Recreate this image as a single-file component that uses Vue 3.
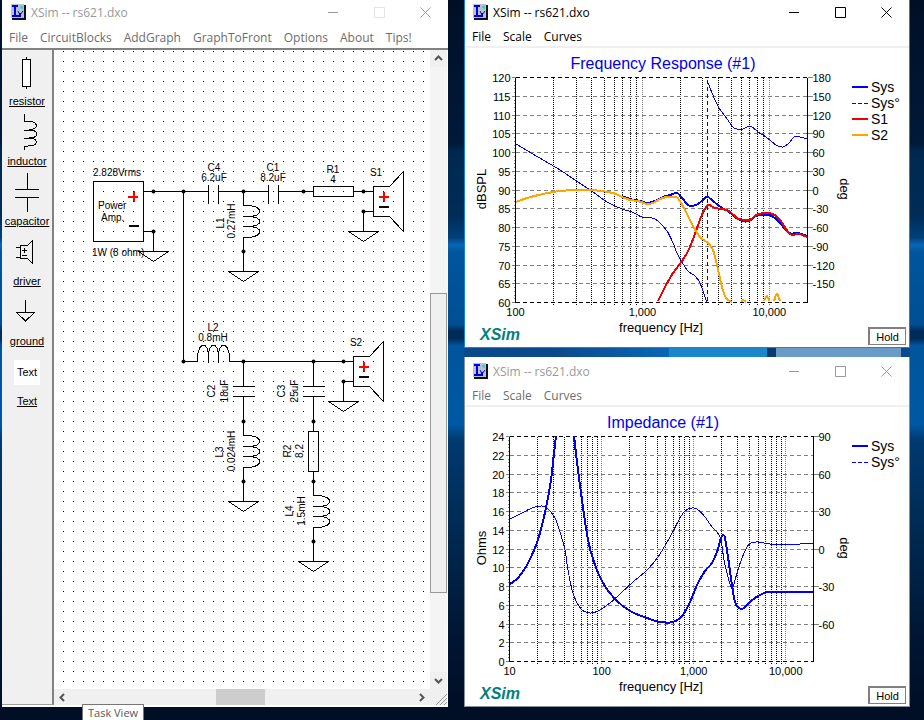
<template>
    <main class="desktop">
        <section class="window editor" aria-label="Circuit editor">
            <header class="title-bar">
                <svg class="app-icon" width="15" height="16" viewBox="0 0 15 16" aria-hidden="true">
                    <path d="M0 0H13V14H0Z" fill="#b9c3cc" />
                    <path d="M14 1V15H1" fill="none" stroke="#111" stroke-width="2" />
                    <path d="M1 2H7M4 2V12M1 12H9V9" fill="none" stroke="#0000e6" stroke-width="2" />
                    <path d="M7 7L9 11M12 7L9 11V13" fill="none" stroke="#0000e6" />
                    <path d="M9 3H12M11 2V5" stroke="#19c8dc" />
                </svg>
                <h1>XSim -- rs621.dxo</h1>
                <div class="caption-buttons">
                    <button v-for="caption in captions" :key="caption.label" :aria-label="caption.label"
                        :class="{ disabled: caption.label === 'Maximize' }">
                        <svg width="11" height="11" viewBox="0 0 11 11">
                            <path :d="caption.path" />
                        </svg>
                    </button>
                </div>
            </header>
            <nav class="menu">
                <button v-for="item in editorMenu" :key="item">{{ item }}</button>
            </nav>
            <div class="workspace">
                <aside class="palette">
                    <button v-for="part in parts" :key="part.name" class="part">
                        <svg v-if="part.path" width="50" height="44" viewBox="0 0 50 44">
                            <path :d="part.path" :fill="part.fill || 'none'" />
                        </svg>
                        <span v-else class="text-tile">Text</span>
                        <span class="part-name">{{ part.name }}</span>
                    </button>
                </aside>
                <div class="scroll-area">
                    <svg class="sheet" role="img" aria-label="Crossover circuit">
                        <defs>
                            <pattern id="dots" width="10" height="10" patternUnits="userSpaceOnUse">
                                <rect x="9" y="1" width="1" height="1" />
                            </pattern>
                        </defs>
                        <rect width="100%" height="100%" fill="#fff" />
                        <g class="wires">
                            <rect x="39.5" y="131.5" width="50" height="60" />
                            <path v-for="(wire, i) in wires" :key="i" :d="wire" />
                            <g v-for="(item, i) in symbols" :key="i"
                                :transform="`translate(${item.x + 0.5} ${item.y + 0.5}) rotate(${item.turn || 0})`">
                                <path :d="shapes[item.type]" />
                                <template v-if="item.type === 'driver'">
                                    <path class="plus" d="M15 5H25M20 0V10" />
                                    <path class="minus" d="M15 15H25" />
                                </template>
                            </g>
                            <path class="plus" d="M74 146.5H84M79.5 141V152" />
                            <path class="minus" d="M75 176H85" />
                        </g>
                        <circle v-for="(node, i) in nodes" :key="i" :cx="node[0] + 0.5" :cy="node[1] + 0.5" r="2" />
                        <rect width="100%" height="100%" fill="url(#dots)" />
                        <g class="labels">
                            <text x="39" y="126">2.828Vrms</text>
                            <text x="44" y="159">Power</text>
                            <text x="47" y="171">Amp.</text>
                            <text x="38" y="206">1W (8 ohm)</text>
                            <text v-for="label in labels" :key="label.text" text-anchor="middle"
                                :transform="`translate(${label.x} ${label.y}) rotate(${label.turn || 0})`">{{ label.text }}</text>
                        </g>
                    </svg>
                    <div class="scrollbar vertical">
                        <button aria-label="Scroll up"><svg width="9" height="9" viewBox="0 0 9 9"><path d="M1 6L4.5 2.5L8 6" /></svg></button>
                        <div class="before"></div>
                        <div class="thumb"></div>
                        <div class="after"></div>
                        <button aria-label="Scroll down"><svg width="9" height="9" viewBox="0 0 9 9"><path d="M1 3L4.5 6.5L8 3" /></svg></button>
                    </div>
                    <div class="scrollbar horizontal">
                        <button aria-label="Scroll left"><svg width="9" height="9" viewBox="0 0 9 9"><path d="M6 1L2.5 4.5L6 8" /></svg></button>
                        <div class="before"></div>
                        <div class="thumb"></div>
                        <div class="after"></div>
                        <button aria-label="Scroll right"><svg width="9" height="9" viewBox="0 0 9 9"><path d="M3 1L6.5 4.5L3 8" /></svg></button>
                    </div>
                    <svg class="grip" width="12" height="12" viewBox="0 0 12 12"><path d="M1 12L12 1M5 12L12 5M9 12L12 9" /></svg>
                </div>
            </div>
        </section>

        <div class="graphs">
            <section v-for="chart in charts" :key="chart.title" class="window graph" :class="{ active: chart.active }"
                :aria-label="chart.title">
                <header class="title-bar">
                    <svg class="app-icon" width="15" height="16" viewBox="0 0 15 16" aria-hidden="true">
                        <path d="M0 0H13V14H0Z" fill="#b9c3cc" />
                        <path d="M14 1V15H1" fill="none" stroke="#111" stroke-width="2" />
                        <path d="M1 2H7M4 2V12M1 12H9V9" fill="none" stroke="#0000e6" stroke-width="2" />
                        <path d="M7 7L9 11M12 7L9 11V13" fill="none" stroke="#0000e6" />
                        <path d="M9 3H12M11 2V5" stroke="#19c8dc" />
                    </svg>
                    <h2>XSim -- rs621.dxo</h2>
                    <div class="caption-buttons">
                        <button v-for="caption in captions" :key="caption.label" :aria-label="caption.label">
                            <svg width="11" height="11" viewBox="0 0 11 11">
                                <path :d="caption.path" />
                            </svg>
                        </button>
                    </div>
                </header>
                <nav class="menu">
                    <button v-for="item in graphMenu" :key="item">{{ item }}</button>
                </nav>
                <div class="plot-area">
                    <svg class="plot" viewBox="0 0 444 299" role="img" :aria-label="chart.title">
                        <text class="plot-title" :x="chart.titleX" y="21" text-anchor="middle">{{ chart.title }}</text>
                        <g class="grid">
                            <path v-for="line in verticals(chart)" :key="line.x" :class="{ decade: line.decade }"
                                class="v-line" :d="`M${line.x} ${top}V${bottom + 3}`" />
                            <path v-for="y in rows(chart)" :key="y" class="h-line" :d="`M${chart.left} ${y}H${chart.right}`" />
                            <path v-for="y in rows(chart)" :key="'t' + y" class="tick" :d="`M${chart.left - 4} ${y}H${chart.left}`" />
                            <path v-for="y in minorTicks(chart)" :key="'m' + y" class="tick"
                                :d="`M${chart.left - 2} ${y}H${chart.left}`" />
                            <path v-for="label in chart.degrees" :key="'d' + label" class="tick"
                                :d="`M${chart.right} ${degreeY(chart, label)}h5`" />
                            <path class="frame-dash" :d="`M${chart.left} ${top}H${chart.right}M${chart.left} ${bottom}H${chart.right}`" />
                            <path class="frame" :d="`M${chart.left} ${top}V${bottom}M${chart.right} ${top}V${bottom}`" />
                        </g>
                        <path v-for="(curve, i) in chart.curves" :key="i" class="curve" :d="smooth(curve.points)"
                            :stroke="curve.color" :stroke-width="curve.width" :stroke-dasharray="curve.dash" />
                        <g class="axis">
                            <text v-for="(y, i) in rows(chart)" :key="y" :x="chart.left - 5" :y="y + 4" text-anchor="end">{{
                                chart.max - i * chart.step }}</text>
                            <text v-for="label in chart.degrees" :key="label" :x="chart.right + 5"
                                :y="degreeY(chart, label) + 4">{{ label }}</text>
                            <text v-for="label in chart.decades" :key="label" :x="freqX(chart, label)" y="268"
                                text-anchor="middle">{{ label.toLocaleString('en-US') }}</text>
                        </g>
                        <g class="axis-title">
                            <text x="196" y="284" text-anchor="middle">frequency [Hz]</text>
                            <text :transform="`translate(21 ${chart.unitY}) rotate(-90)`" text-anchor="middle">{{ chart.unit }}</text>
                            <text transform="translate(375 141) rotate(90)" text-anchor="middle">deg</text>
                        </g>
                        <g class="legend">
                            <template v-for="(entry, i) in chart.legend" :key="entry.name">
                                <path :d="`M387 ${(entry.dash ? 39.5 : 39) + i * 16}h16`" :stroke="entry.color"
                                    :stroke-width="entry.dash ? 1 : 2" :stroke-dasharray="entry.dash" />
                                <text x="406" :y="44 + i * 16">{{ entry.name }}</text>
                            </template>
                        </g>
                    </svg>
                    <div class="plot-footer">
                        <strong>XSim</strong>
                        <button class="hold">Hold</button>
                    </div>
                </div>
            </section>
        </div>
        <div class="tooltip" role="tooltip">Task View</div>
    </main>
</template>

<script setup>
const editorMenu = ['File', 'CircuitBlocks', 'AddGraph', 'GraphToFront', 'Options', 'About', 'Tips!']
const graphMenu = ['File', 'Scale', 'Curves']

const captions = [
    { label: 'Minimize', path: 'M0 5.5H10' },
    { label: 'Maximize', path: 'M0.5 0.5H10.5V10.5H0.5Z' },
    { label: 'Close', path: 'M0.5 0.5L10.5 10.5M10.5 0.5L0.5 10.5' },
]

const parts = [
    { name: 'resistor', fill: '#fff', path: 'M20.5 9.5H28.5V36.5H20.5ZM24.5 7V9M24.5 37V39' },
    { name: 'inductor', path: 'M22.5 4V11H26C37 12 37 19 27 20H22H27C37 20 37 28 27 28H22H27C37 28 37 36 26 36L22.5 37V40' },
    { name: 'capacitor', path: 'M25.5 3V19.5M13 19.5H37M13 27.5H37M25.5 27.5V42' },
    { name: 'driver', path: 'M18.5 15.5H25.5L30.5 10.5V33.5L25.5 28.5H18.5ZM14 17.5H18M14 27.5H18M20 20.5H25M22.5 18V23M20 25.5H25' },
    { name: 'ground', path: 'M23.5 10V22M14.5 22.5H32.5L23.5 31Z' },
    { name: 'Text' },
]

// every symbol hangs down from its first terminal; turn -90 lays it to the right
const shapes = {
    resistor: 'M0 0V10M0 50V60M-5 10H5V50H-5Z',
    capacitor: 'M0 0V25M0 35V60M-11 25H11M-11 35H11',
    capacitorAcross: 'M0 0V25M0 35V60M-12 25H7M-12 35H7',
    inductor: 'M0 0V14H5C20 15 20 25 5 25H-1H5C20 25 20 35 5 35H-1H5C20 35 20 45 5 46H0V60',
    ground: 'M0 0V20M-15 20H15L0 30Z',
    driver: 'M0 0H10M0 20H10M10 -5H26L40 -20V40L26 25H10Z',
}

const symbols = [
    { type: 'capacitorAcross', x: 129, y: 141, turn: -90 },
    { type: 'capacitorAcross', x: 189, y: 141, turn: -90 },
    { type: 'resistor', x: 249, y: 141, turn: -90 },
    { type: 'driver', x: 309, y: 141 },
    { type: 'ground', x: 309, y: 161 },
    { type: 'ground', x: 99, y: 181 },
    { type: 'inductor', x: 189, y: 141 },
    { type: 'ground', x: 189, y: 201 },
    { type: 'inductor', x: 129, y: 311, turn: -90 },
    { type: 'capacitor', x: 189, y: 311 },
    { type: 'inductor', x: 189, y: 371 },
    { type: 'ground', x: 189, y: 431 },
    { type: 'capacitor', x: 259, y: 311 },
    { type: 'resistor', x: 259, y: 371 },
    { type: 'inductor', x: 259, y: 431 },
    { type: 'ground', x: 259, y: 491 },
    { type: 'driver', x: 289, y: 311 },
    { type: 'ground', x: 289, y: 331 },
]

const wires = ['M89 141.5H129', 'M89 181.5H99', 'M129.5 141V311', 'M189 311.5H289']

const nodes = [
    [99, 141], [129, 141], [189, 141], [249, 141], [309, 141], [309, 161], [99, 181], [189, 201],
    [129, 311], [189, 311], [259, 311], [289, 311], [289, 331], [189, 371], [259, 371], [189, 431],
    [259, 431], [259, 491],
]

const labels = [
    { text: 'C4', x: 160, y: 121 },
    { text: '6.2uF', x: 160, y: 131 },
    { text: 'C1', x: 219, y: 121 },
    { text: '8.2uF', x: 219, y: 131 },
    { text: 'R1', x: 279, y: 123 },
    { text: '4', x: 279, y: 133 },
    { text: 'S1', x: 322, y: 126 },
    { text: 'L2', x: 159, y: 281 },
    { text: '0.8mH', x: 159, y: 291 },
    { text: 'S2', x: 302, y: 296 },
    { text: 'L1', x: 170, y: 173, turn: -90 },
    { text: '0.27mH', x: 181, y: 171, turn: -90 },
    { text: 'C2', x: 161, y: 341, turn: -90 },
    { text: '18uF', x: 174, y: 341, turn: -90 },
    { text: 'C3', x: 231, y: 341, turn: -90 },
    { text: '25uF', x: 244, y: 341, turn: -90 },
    { text: 'L3', x: 169, y: 402, turn: -90 },
    { text: '0.024mH', x: 181, y: 401, turn: -90 },
    { text: 'R2', x: 237, y: 401, turn: -90 },
    { text: '8.2', x: 249, y: 401, turn: -90 },
    { text: 'L4', x: 239, y: 461, turn: -90 },
    { text: '1.5mH', x: 251, y: 461, turn: -90 },
]

const top = 29.5
const bottom = 254.5

const blue = '#0000f0'
const red = '#f00000'
const orange = '#ffa500'

const charts = [
    {
        title: 'Frequency Response (#1)',
        titleX: 198,
        active: true,
        left: 50.5,
        right: 342.5,
        from: 100,
        to: 20000,
        max: 120,
        step: 5,
        count: 12,
        unit: 'dBSPL',
        unitY: 141,
        degreeTop: 180,
        degreeStep: 30,
        degrees: [180, 150, 120, 90, 60, 30, 0, -30, -60, -90, -120, -150],
        decades: [100, 1000, 10000],
        legend: [
            { name: 'Sys', color: blue },
            { name: 'Sys°', color: blue, dash: '4 2' },
            { name: 'S1', color: red },
            { name: 'S2', color: orange },
        ],
        curves: [
            { color: blue, width: 1, points: [[51, 96], [73, 109], [95, 122], [110, 132], [128, 144], [142, 154], [157, 161], [167, 164], [177, 169], [187, 170], [193, 173], [202, 183], [208, 195], [212, 205], [217, 214], [223, 223], [230, 228], [235, 235], [240, 249], [242, 254]] },
            { color: blue, width: 1, dash: '4 3', points: [[242.5, 32], [242.5, 254]] },
            { color: blue, width: 1, points: [[242, 32], [247, 45], [254, 60], [260, 68], [268, 79], [272, 81], [278, 81], [282, 79], [287, 79], [293, 84], [298, 87], [305, 92], [311, 97], [318, 99], [324, 95], [329, 89], [335, 89], [342, 91]] },
            { color: blue, width: 2, points: [[157, 148], [165, 151], [175, 153], [183, 155], [192, 152], [198, 149], [205, 147], [212, 145], [217, 150], [223, 157], [227, 158], [233, 156], [240, 150], [243, 149], [248, 153], [257, 160], [263, 163], [270, 169], [277, 173], [284, 173], [291, 168], [300, 167], [307, 168], [315, 175], [324, 185], [333, 185], [342, 188]] },
            { color: red, width: 2, points: [[193, 253], [200, 239], [208, 225], [217, 213], [222, 205], [227, 194], [231, 183], [236, 169], [241, 159], [244, 157], [250, 160], [257, 161], [264, 163], [272, 170], [278, 172], [285, 172], [291, 167], [300, 165], [308, 166], [315, 172], [325, 186], [334, 186], [342, 189]] },
            { color: orange, width: 2, points: [[51, 154], [62, 150], [78, 146], [95, 143], [112, 142], [128, 142], [148, 145], [157, 149], [165, 152], [173, 153], [182, 156], [188, 155], [195, 151], [202, 149], [211, 149], [215, 153], [222, 166], [228, 178], [235, 189], [243, 195], [248, 202], [252, 217], [257, 239], [260, 248], [263, 252], [267, 254]] },
            { color: orange, width: 2, points: [[276, 254], [278, 252], [281, 254]] },
            { color: orange, width: 2, points: [[299, 253], [302, 248], [304, 253]] },
            { color: orange, width: 2, points: [[309, 253], [312, 246], [315, 253]] },
        ],
    },
    {
        title: 'Impedance (#1)',
        titleX: 198,
        left: 44.5,
        right: 348.5,
        from: 10,
        to: 20000,
        max: 24,
        step: 2,
        count: 12,
        unit: 'Ohms',
        unitY: 141,
        degreeTop: 90,
        degreeStep: 15,
        degrees: [90, 60, 30, 0, -30, -60],
        decades: [10, 100, 1000, 10000],
        legend: [
            { name: 'Sys', color: blue },
            { name: 'Sys°', color: blue, dash: '4 2' },
        ],
        curves: [
            { color: blue, width: 1, points: [[45, 112], [55, 107], [67, 101], [77, 99], [83, 102], [90, 111], [95, 125], [100, 143], [103, 163], [108, 186], [116, 202], [125, 206], [133, 204], [145, 196], [155, 187], [168, 175], [182, 163], [193, 150], [205, 130], [215, 111], [220, 104], [227, 101], [232, 102], [240, 110], [247, 120], [252, 125], [256, 133], [259, 153], [263, 170], [266, 180], [268, 180], [272, 166], [277, 151], [282, 140], [286, 136], [293, 135], [305, 137], [320, 138], [335, 137], [348, 136]] },
            { color: blue, width: 2, points: [[45, 177], [53, 171], [62, 158], [70, 141], [75, 126], [81, 101], [86, 73], [89, 46], [91, 29]] },
            { color: blue, width: 2, points: [[109, 29], [112, 55], [117, 93], [123, 133], [129, 155], [138, 176], [150, 192], [165, 204], [182, 211], [195, 215], [208, 215], [217, 209], [225, 195], [232, 178], [240, 164], [247, 156], [252, 145], [256, 131], [258, 128], [260, 131], [263, 150], [267, 178], [270, 195], [274, 201], [279, 201], [285, 195], [293, 189], [303, 185], [318, 185], [348, 185]] },
        ],
    },
]

const freqX = (chart, freq) =>
    chart.left + (chart.right - chart.left) * Math.log(freq / chart.from) / Math.log(chart.to / chart.from)

const crisp = (value) => Math.floor(value) + 0.5

const verticals = (chart) => {
    const lines = []
    for (let decade = chart.from; decade < chart.to; decade *= 10) {
        for (let n = 1; n < 10; n++) {
            const freq = decade * n
            if (freq > chart.from && freq < chart.to) {
                lines.push({ x: crisp(freqX(chart, freq)), decade: n === 1 })
            }
        }
    }
    return lines
}

const rowY = (chart, row) => crisp(top + (bottom - top) * row / chart.count)

const rows = (chart) => Array.from({ length: chart.count + 1 }, (_, i) => rowY(chart, i))

const minorTicks = (chart) => Array.from({ length: chart.count * 5 }, (_, i) => rowY(chart, i / 5))

const degreeY = (chart, degree) => rowY(chart, (chart.degreeTop - degree) / chart.degreeStep)

// Catmull-Rom through the points, written out as cubic segments
const smooth = (points) => {
    let d = `M${points[0]}`
    for (let i = 0; i < points.length - 1; i++) {
        const [a, b, c, e] = [points[i - 1] || points[i], points[i], points[i + 1], points[i + 2] || points[i + 1]]
        d += `C${b[0] + (c[0] - a[0]) / 6} ${b[1] + (c[1] - a[1]) / 6} ${c[0] - (e[0] - b[0]) / 6} ${c[1] - (e[1] - b[1]) / 6} ${c[0]} ${c[1]}`
    }
    return d
}
</script>

<style>
body {
    margin: 0;
}
</style>

<style scoped>
.desktop {
    position: relative;
    box-sizing: border-box;
    display: grid;
    grid-template-columns: minmax(0, 1fr) minmax(0, 1fr);
    gap: 16px;
    min-height: 100vh;
    padding: 0 14px 13px 2px;
    overflow: hidden;
    font-family: "Open Sans", "Noto Sans", sans-serif;
    font-size: 12px;
    background:
        linear-gradient(to bottom, #000f26 0, #001a3a 20%, #00284f 21%, #002c58 30%, #00407a 33%, #0a66b4 34%, #00559c 35%, #004f94 45%, #002a58 46%, #002a58 47%, #00559c 48%, #0058a4 59%, #003a70 61%, #00284f 75%, #001634 88%, #000f26 98%);
}

button {
    margin: 0;
    padding: 0;
    border: 0;
    background: none;
    color: inherit;
    font: inherit;
}

.window {
    display: flex;
    flex-direction: column;
    min-width: 0;
    background: #fff;
    color: #6d6d6d;
}

.title-bar {
    display: flex;
    align-items: center;
    height: 24px;
    padding: 0 0 4px 9px;
}

.title-bar h1,
.title-bar h2 {
    flex: 1;
    margin: 0 0 0 5px;
    color: #999;
    font-size: 12px;
    font-weight: 400;
    white-space: nowrap;
}

.caption-buttons {
    display: flex;
}

.caption-buttons button {
    display: flex;
    justify-content: center;
    width: 46px;
}

.caption-buttons path {
    fill: none;
    stroke: #999;
}

.caption-buttons .disabled path {
    stroke: #e4e4e4;
}

.menu {
    display: flex;
    gap: 12px;
    padding: 0 7px;
    line-height: 18px;
    border-bottom: 2px solid #f0f0f0;
}

.editor .menu {
    padding-top: 1px;
    padding-bottom: 1px;
    border-bottom: 2px solid #828282;
}

.workspace {
    display: flex;
    flex: 1;
    padding: 0 1px 2px 0;
}

.palette {
    width: 50px;
    background: #f0f0f0;
    border-right: 2px solid #828282;
    border-bottom: 1px solid #a0a0a0;
}

.part {
    display: flex;
    flex-direction: column;
    align-items: center;
    width: 100%;
    height: 60px;
    color: #000;
    font: 11px "Liberation Sans", Arial, sans-serif;
}

.part path {
    stroke: #000;
    shape-rendering: crispEdges;
}

.part svg {
    flex: none;
}

.part-name {
    line-height: 14px;
    text-decoration: underline;
}

.text-tile {
    box-sizing: border-box;
    height: 25px;
    margin: 10px 0 9px;
    padding: 0 3px;
    background: #fff;
    line-height: 24px;
}

.scroll-area {
    display: grid;
    flex: 1;
    grid-template-columns: minmax(0, 1fr) 17px;
    grid-template-rows: minmax(0, 1fr) 16px;
    background: #f0f0f0;
}

.sheet {
    width: 100%;
    height: 100%;
}

.wires path,
.wires rect {
    fill: none;
    stroke: #000;
    shape-rendering: crispEdges;
}

.wires .plus {
    stroke: #f00;
    stroke-width: 2;
}

.wires .minus {
    stroke-width: 2;
}

.labels {
    font: 10px "Liberation Sans", Arial, sans-serif;
}

.scrollbar {
    display: flex;
    background: #f4f4f4;
}

.vertical {
    flex-direction: column;
}

.scrollbar button {
    display: flex;
    align-items: center;
    justify-content: center;
    width: 17px;
    height: 17px;
    background: #f0f0f0;
}

.horizontal {
    background: #f0f0f0;
}

.horizontal button {
    height: 16px;
}

.scrollbar button path {
    fill: none;
    stroke: #555;
    stroke-width: 2;
}

.vertical .before {
    flex: 226;
}

.vertical .thumb {
    flex: 299;
    box-sizing: border-box;
    background: #f0f0f0;
    border: 1px solid #999;
}

.vertical .after {
    flex: 79;
}

.horizontal .before {
    flex: 145;
}

.horizontal .thumb {
    flex: 49;
    background: #cdcdcd;
}

.horizontal .after {
    flex: 148;
}

.grip {
    place-self: end;
}

.grip path {
    stroke: #999;
}

.graphs {
    display: flex;
    flex-direction: column;
    align-self: start;
    gap: 9px;
    min-width: 0;
    background: linear-gradient(to right, #0a4a8c 0 20%, #0a66b8 46%, #1c86cc 46% 68%, #0a3a70 68% 70%, #6a9cc8 70% 98%, #0a4a8c 98%);
}

.graph {
    border: 1px solid #8a9099;
    border-top: 0;
}

.graph .title-bar {
    height: 28px;
    padding: 0 0 2px 8px;
}

.graph.active {
    border-color: #1883d7;
    color: #000;
}

.graph.active .title-bar {
    height: 24px;
    padding-bottom: 4px;
}

.graph.active h2 {
    color: #000;
}

.graph.active .caption-buttons path {
    stroke: #000;
}

.plot-area {
    display: grid;
    flex: 1;
}

.plot {
    grid-area: 1 / 1;
    display: block;
    width: 100%;
    height: auto;
    font-family: "Liberation Sans", Arial, sans-serif;
}

.plot-footer {
    grid-area: 1 / 1;
    align-self: end;
    display: flex;
    align-items: end;
    justify-content: space-between;
    padding: 0 3px 2px 15px;
}

.plot-footer strong {
    color: #008080;
    font: italic bold 16px/20px "Liberation Sans", Arial, sans-serif;
}

.hold {
    width: 38px;
    height: 18px;
    border: 2px solid #808080;
    border-right-width: 1px;
    border-bottom-width: 1px;
    background: #fff;
    color: #000;
    font: 11px "Liberation Sans", Arial, sans-serif;
}

.plot-title {
    fill: #0000f0;
    font-size: 16px;
}

.grid path {
    fill: none;
    stroke: #808080;
    shape-rendering: crispEdges;
}

.grid .v-line {
    stroke: #000;
    stroke-dasharray: 1 1;
}

.grid .decade {
    stroke: #808080;
}

.grid .h-line {
    stroke-dasharray: 4 3;
}

.grid .frame,
.grid .frame-dash {
    stroke: #000;
}

.grid .frame-dash {
    stroke-dasharray: 4 3;
}

.curve {
    fill: none;
    shape-rendering: crispEdges;
}

.axis {
    font-size: 11px;
}

.axis-title {
    font-size: 13px;
}

.legend {
    font-size: 14px;
}

.tooltip {
    position: absolute;
    left: 82px;
    bottom: 0;
    padding: 0 5px;
    background: #fff;
    border: 1px solid #767676;
    border-bottom: 0;
    color: #575757;
    font-size: 11px;
    line-height: 15px;
}
</style>
